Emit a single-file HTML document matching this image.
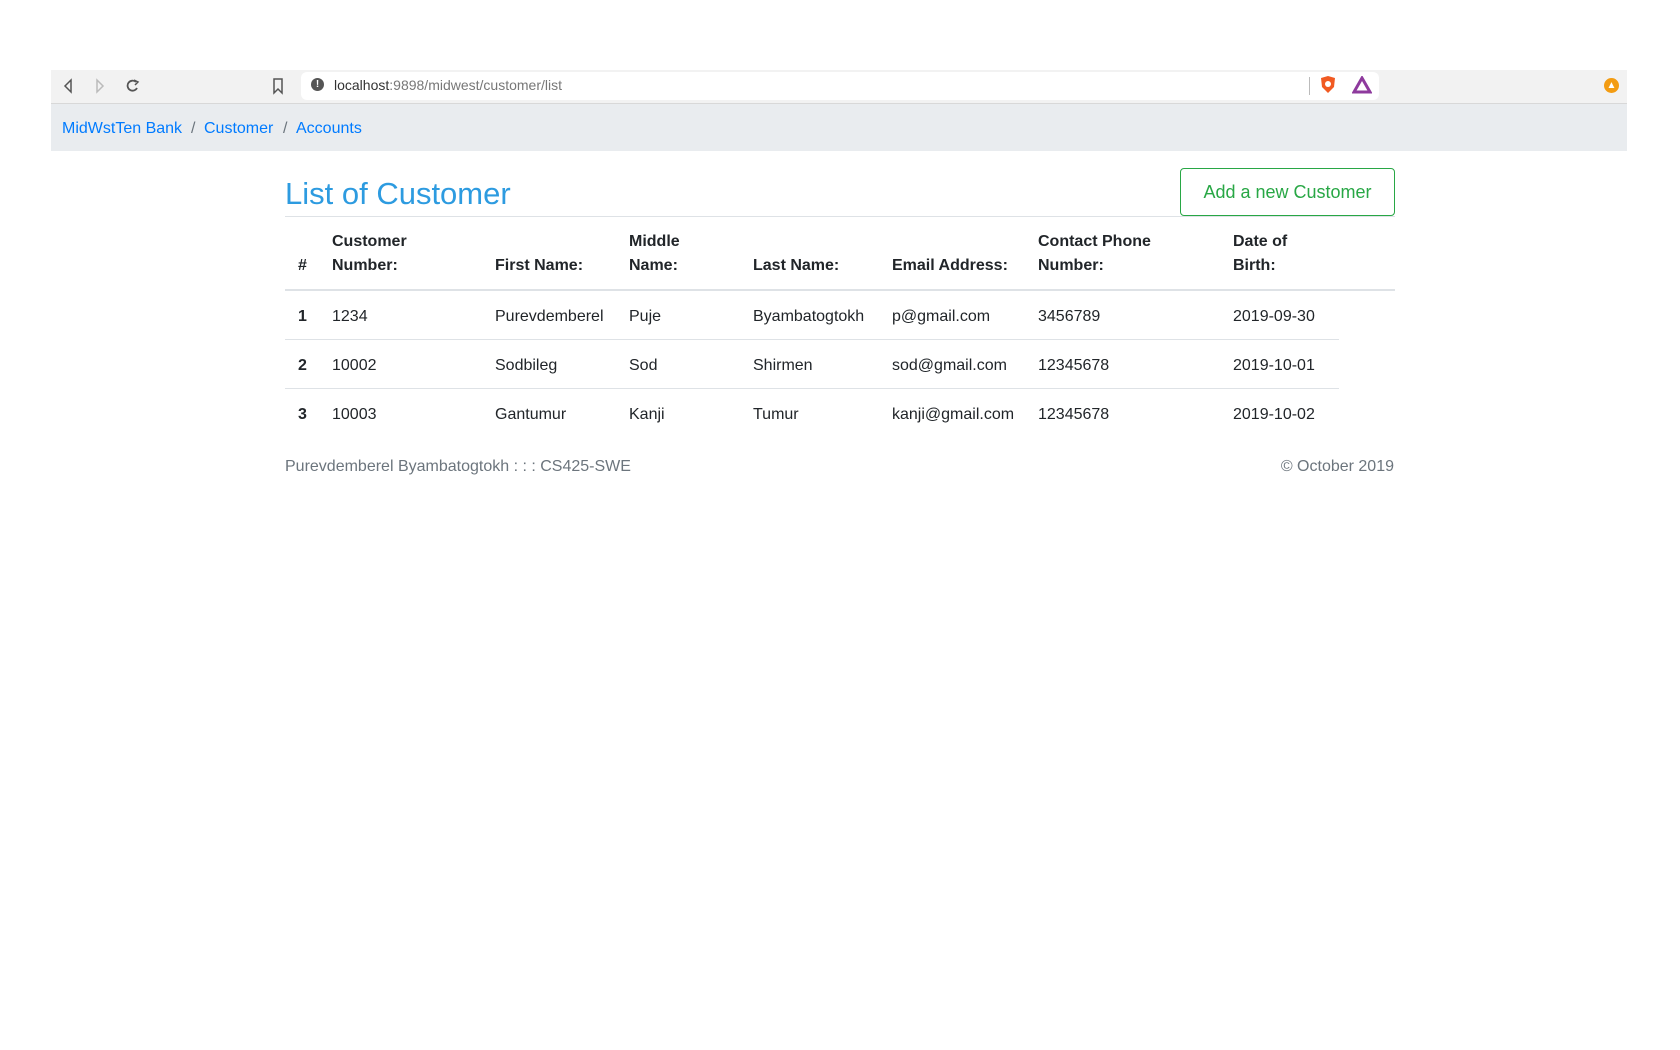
<!DOCTYPE html>
<html><head><meta charset="utf-8"><style>
body{margin:0;width:1680px;height:1050px;background:#fff;font-family:"Liberation Sans",sans-serif;position:relative;overflow:hidden;color:#212529}
.a{position:absolute;white-space:nowrap}
#tb{left:51px;top:70px;width:1576px;height:33px;background:#f2f2f2;border-bottom:1px solid #d8d8d8}
#url{left:301px;top:72px;width:1078px;height:28px;background:#fff;border-radius:6px}
#bc{left:51px;top:104px;width:1576px;height:47px;background:#e9ecef}
.bc{top:120px;font-size:16px;color:#007bff}
.sep{top:120px;font-size:16px;color:#6c757d}
h1{margin:0;position:absolute;left:285px;top:176px;font-size:31px;font-weight:normal;color:#2d9be0}
#btn{left:1180px;top:168px;width:213px;height:46px;border:1px solid #28a745;border-radius:4px;color:#28a745;font-size:18px;line-height:46px;text-align:center}
.hr{position:absolute;height:1px;background:#dee2e6}
.th{font-size:16px;font-weight:bold;line-height:24px}
.td{font-size:16px}
.ft{top:458px;font-size:16px;color:#6c757d}
</style></head><body>
<div class="a" id="tb"></div>
<div class="a" id="url"></div>
<svg class="a" style="left:59px;top:76px" width="90" height="20" viewBox="0 0 90 20">
<path d="M12 4 L6 10 L12 16 Z" fill="none" stroke="#555" stroke-width="1.5"/>
<path d="M38 4 L44 10 L38 16 Z" fill="none" stroke="#bbb" stroke-width="1.5"/>
<path d="M77 6 A5 5 0 1 0 78 12" fill="none" stroke="#555" stroke-width="1.8"/><path d="M75 4 L79 6 L76 9" fill="none" stroke="#555" stroke-width="1.5"/>
</svg>
<svg class="a" style="left:271px;top:77px" width="14" height="18"><path d="M3 2 H11 V16 L7 12 L3 16 Z" fill="none" stroke="#555" stroke-width="1.5"/></svg>
<div class="a" style="left:311px;top:78px;width:13px;height:13px;border-radius:50%;background:#555;color:#fff;font-size:10px;line-height:13px;text-align:center;font-weight:bold">!</div>
<div class="a" style="left:334px;top:77px;font-size:14px;color:#333">localhost<span style="color:#777">:9898/midwest/customer/list</span></div>
<div class="a" style="left:1309px;top:77px;width:1px;height:18px;background:#bbb"></div>
<svg class="a" style="left:1319px;top:75px" width="18" height="20"><path d="M2 3 L9 1 L16 3 L15 12 L9 18 L3 12 Z" fill="#f15a22"/><circle cx="9" cy="9" r="3" fill="#fff"/></svg>
<svg class="a" style="left:1352px;top:76px" width="20" height="18"><path d="M10 2 L18 16 H2 Z" fill="none" stroke="#8e3a9d" stroke-width="3"/></svg>
<div class="a" style="left:1604px;top:78px;width:15px;height:15px;border-radius:50%;background:#f39c12;color:#fff;font-size:10px;line-height:15px;text-align:center">▲</div>
<div class="a" id="bc"></div>
<div class="a bc" style="left:62px">MidWstTen Bank</div>
<div class="a sep" style="left:191px">/</div>
<div class="a bc" style="left:204px">Customer</div>
<div class="a sep" style="left:283px">/</div>
<div class="a bc" style="left:296px">Accounts</div>
<h1>List of Customer</h1>
<div class="a" id="btn">Add a new Customer</div>
<div class="hr" style="left:285px;top:216px;width:1110px"></div>
<div class="a th" style="left:298px;top:254px">#</div>
<div class="a th" style="left:332px;top:230px">Customer<br>Number:</div>
<div class="a th" style="left:495px;top:254px">First Name:</div>
<div class="a th" style="left:629px;top:230px">Middle<br>Name:</div>
<div class="a th" style="left:753px;top:254px">Last Name:</div>
<div class="a th" style="left:892px;top:254px">Email Address:</div>
<div class="a th" style="left:1038px;top:230px">Contact Phone<br>Number:</div>
<div class="a th" style="left:1233px;top:230px">Date of<br>Birth:</div>
<div class="hr" style="left:285px;top:289px;width:1110px;height:2px"></div>
<div class="hr" style="left:285px;top:339px;width:1054px"></div>
<div class="hr" style="left:285px;top:388px;width:1054px"></div>
<div class="a td" style="top:308px;left:0">
<span class="a" style="left:298px;font-weight:bold">1</span><span class="a" style="left:332px">1234</span><span class="a" style="left:495px">Purevdemberel</span><span class="a" style="left:629px">Puje</span><span class="a" style="left:753px">Byambatogtokh</span><span class="a" style="left:892px">p@gmail.com</span><span class="a" style="left:1038px">3456789</span><span class="a" style="left:1233px">2019-09-30</span></div>
<div class="a td" style="top:357px;left:0">
<span class="a" style="left:298px;font-weight:bold">2</span><span class="a" style="left:332px">10002</span><span class="a" style="left:495px">Sodbileg</span><span class="a" style="left:629px">Sod</span><span class="a" style="left:753px">Shirmen</span><span class="a" style="left:892px">sod@gmail.com</span><span class="a" style="left:1038px">12345678</span><span class="a" style="left:1233px">2019-10-01</span></div>
<div class="a td" style="top:406px;left:0">
<span class="a" style="left:298px;font-weight:bold">3</span><span class="a" style="left:332px">10003</span><span class="a" style="left:495px">Gantumur</span><span class="a" style="left:629px">Kanji</span><span class="a" style="left:753px">Tumur</span><span class="a" style="left:892px">kanji@gmail.com</span><span class="a" style="left:1038px">12345678</span><span class="a" style="left:1233px">2019-10-02</span></div>
<div class="a ft" style="left:285px">Purevdemberel Byambatogtokh : : : CS425-SWE</div>
<div class="a ft" style="right:286px">© October 2019</div>
</body></html>
